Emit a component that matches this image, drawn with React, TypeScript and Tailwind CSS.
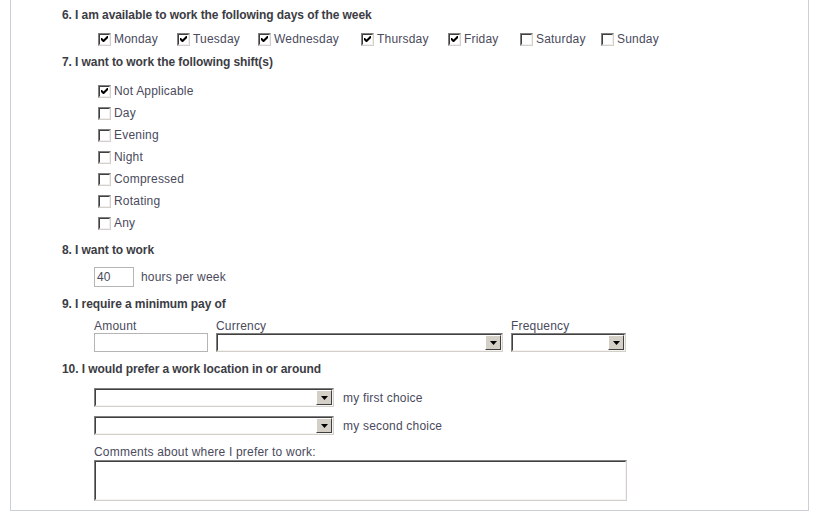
import React from "react";

const font = { fontFamily: '"Liberation Sans", Arial, sans-serif' };

function Box({ checked }: { checked?: boolean }) {
  return (
    <span className="inline-flex w-[13px] h-[13px] shrink-0 border border-t-[#808080] border-l-[#808080] border-b-[#d4d0c8] border-r-[#d4d0c8]">
      <span className="flex flex-1 items-center justify-center bg-white border border-t-[#404040] border-l-[#404040] border-b-[#f0f0f0] border-r-[#f0f0f0]">
        {checked && (
          <svg width="7" height="7" viewBox="0 0 7 7" className="block">
            <path d="M0 2 L0 4 L2 6 L3 6 L7 2 L7 0 L6 0 L2.5 3.5 L1 2 Z" fill="#000" />
          </svg>
        )}
      </span>
    </span>
  );
}

function Check({ label, checked, w }: { label: string; checked?: boolean; w?: string }) {
  return (
    <div className={`flex items-center gap-[3px] ${w ?? ""}`}>
      <Box checked={checked} />
      <span className="text-[12px] leading-[14px] tracking-[0.2px] text-[#4a4a5c]">{label}</span>
    </div>
  );
}

function SelectBox({ w }: { w: string }) {
  return (
    <div className={`flex h-[19px] ${w} border border-t-[#808080] border-l-[#808080] border-b-[#d4d0c8] border-r-[#d4d0c8]`}>
      <div className="flex flex-1 bg-white border border-t-[#404040] border-l-[#404040] border-b-[#f4f4f4] border-r-[#f4f4f4]">
        <div className="flex-1" />
        <div className="flex w-[16px] items-center justify-center bg-[#d4d0c8] border border-t-[#ffffff] border-l-[#ffffff] border-b-[#404040] border-r-[#404040]">
          <svg width="7" height="4" viewBox="0 0 7 4" className="block">
            <path d="M0 0 H7 L3.5 4 Z" fill="#000" />
          </svg>
        </div>
      </div>
    </div>
  );
}

function Heading({ children, mt }: { children: React.ReactNode; mt: string }) {
  return (
    <div className={`${mt} h-[16px] flex items-center text-[12px] font-bold tracking-[-0.08px] text-[#3c3c44]`}>{children}</div>
  );
}

const txt = "text-[12px] tracking-[0.2px] text-[#4a4a5c]";

export default function App() {
  const shifts = ["Not Applicable", "Day", "Evening", "Night", "Compressed", "Rotating", "Any"];
  return (
    <div style={font} className="w-[816px] h-[515px] bg-white overflow-hidden">
      <div className="ml-[10px] w-[799px] h-[511px] border-l border-r border-b border-[#c9d0d8] pl-[51px] pt-[7px] flex flex-col">
        <Heading mt="mt-0">6. I am available to work the following days of the week</Heading>
        <div className="h-[30px] flex items-center pl-[36px] pt-[2px]">
          <Check label="Monday" checked w="w-[79px]" />
          <Check label="Tuesday" checked w="w-[81px]" />
          <Check label="Wednesday" checked w="w-[103px]" />
          <Check label="Thursday" checked w="w-[87px]" />
          <Check label="Friday" checked w="w-[72px]" />
          <Check label="Saturday" w="w-[81px]" />
          <Check label="Sunday" />
        </div>
        <Heading mt="mt-[1px]">7. I want to work the following shift(s)</Heading>
        <div className="mt-[10px] flex flex-col pl-[36px]">
          {shifts.map((s, i) => (
            <div key={s} className="h-[22px] flex items-center">
              <Check label={s} checked={i === 0} />
            </div>
          ))}
        </div>
        <Heading mt="mt-[8px]">8. I want to work</Heading>
        <div className="mt-[9px] flex items-center pl-[32px] gap-[7px]">
          <div className={`w-[40px] h-[20px] border border-[#b5b5b5] flex items-center pl-[2px] ${txt}`}>40</div>
          <span className={txt}>hours per week</span>
        </div>
        <Heading mt="mt-[9px]">9. I require a minimum pay of</Heading>
        <div className="mt-[7px] pl-[32px] flex">
          <div className="flex flex-col w-[122px]">
            <span className={`h-[14px] flex items-center ${txt}`}>Amount</span>
            <div className="w-[114px] h-[19px] border border-[#b5b5b5]" />
          </div>
          <div className="flex flex-col w-[295px]">
            <span className={`h-[14px] flex items-center ${txt}`}>Currency</span>
            <SelectBox w="w-[287px]" />
          </div>
          <div className="flex flex-col">
            <span className={`h-[14px] flex items-center ${txt}`}>Frequency</span>
            <SelectBox w="w-[115px]" />
          </div>
        </div>
        <Heading mt="mt-[9px]">10. I would prefer a work location in or around</Heading>
        <div className="mt-[11px] pl-[32px] flex items-center gap-[9px]">
          <SelectBox w="w-[240px]" />
          <span className={txt}>my first choice</span>
        </div>
        <div className="mt-[9px] pl-[32px] flex items-center gap-[9px]">
          <SelectBox w="w-[240px]" />
          <span className={txt}>my second choice</span>
        </div>
        <div className={`mt-[10px] pl-[32px] h-[14px] flex items-center ${txt}`}>Comments about where I prefer to work:</div>
        <div className="mt-[1px] ml-[32px] w-[533px] h-[41px] border border-t-[#808080] border-l-[#808080] border-b-[#d4d0c8] border-r-[#d4d0c8]">
          <div className="w-full h-full bg-white border border-t-[#404040] border-l-[#404040] border-b-[#f4f4f4] border-r-[#f4f4f4]" />
        </div>
      </div>
    </div>
  );
}
